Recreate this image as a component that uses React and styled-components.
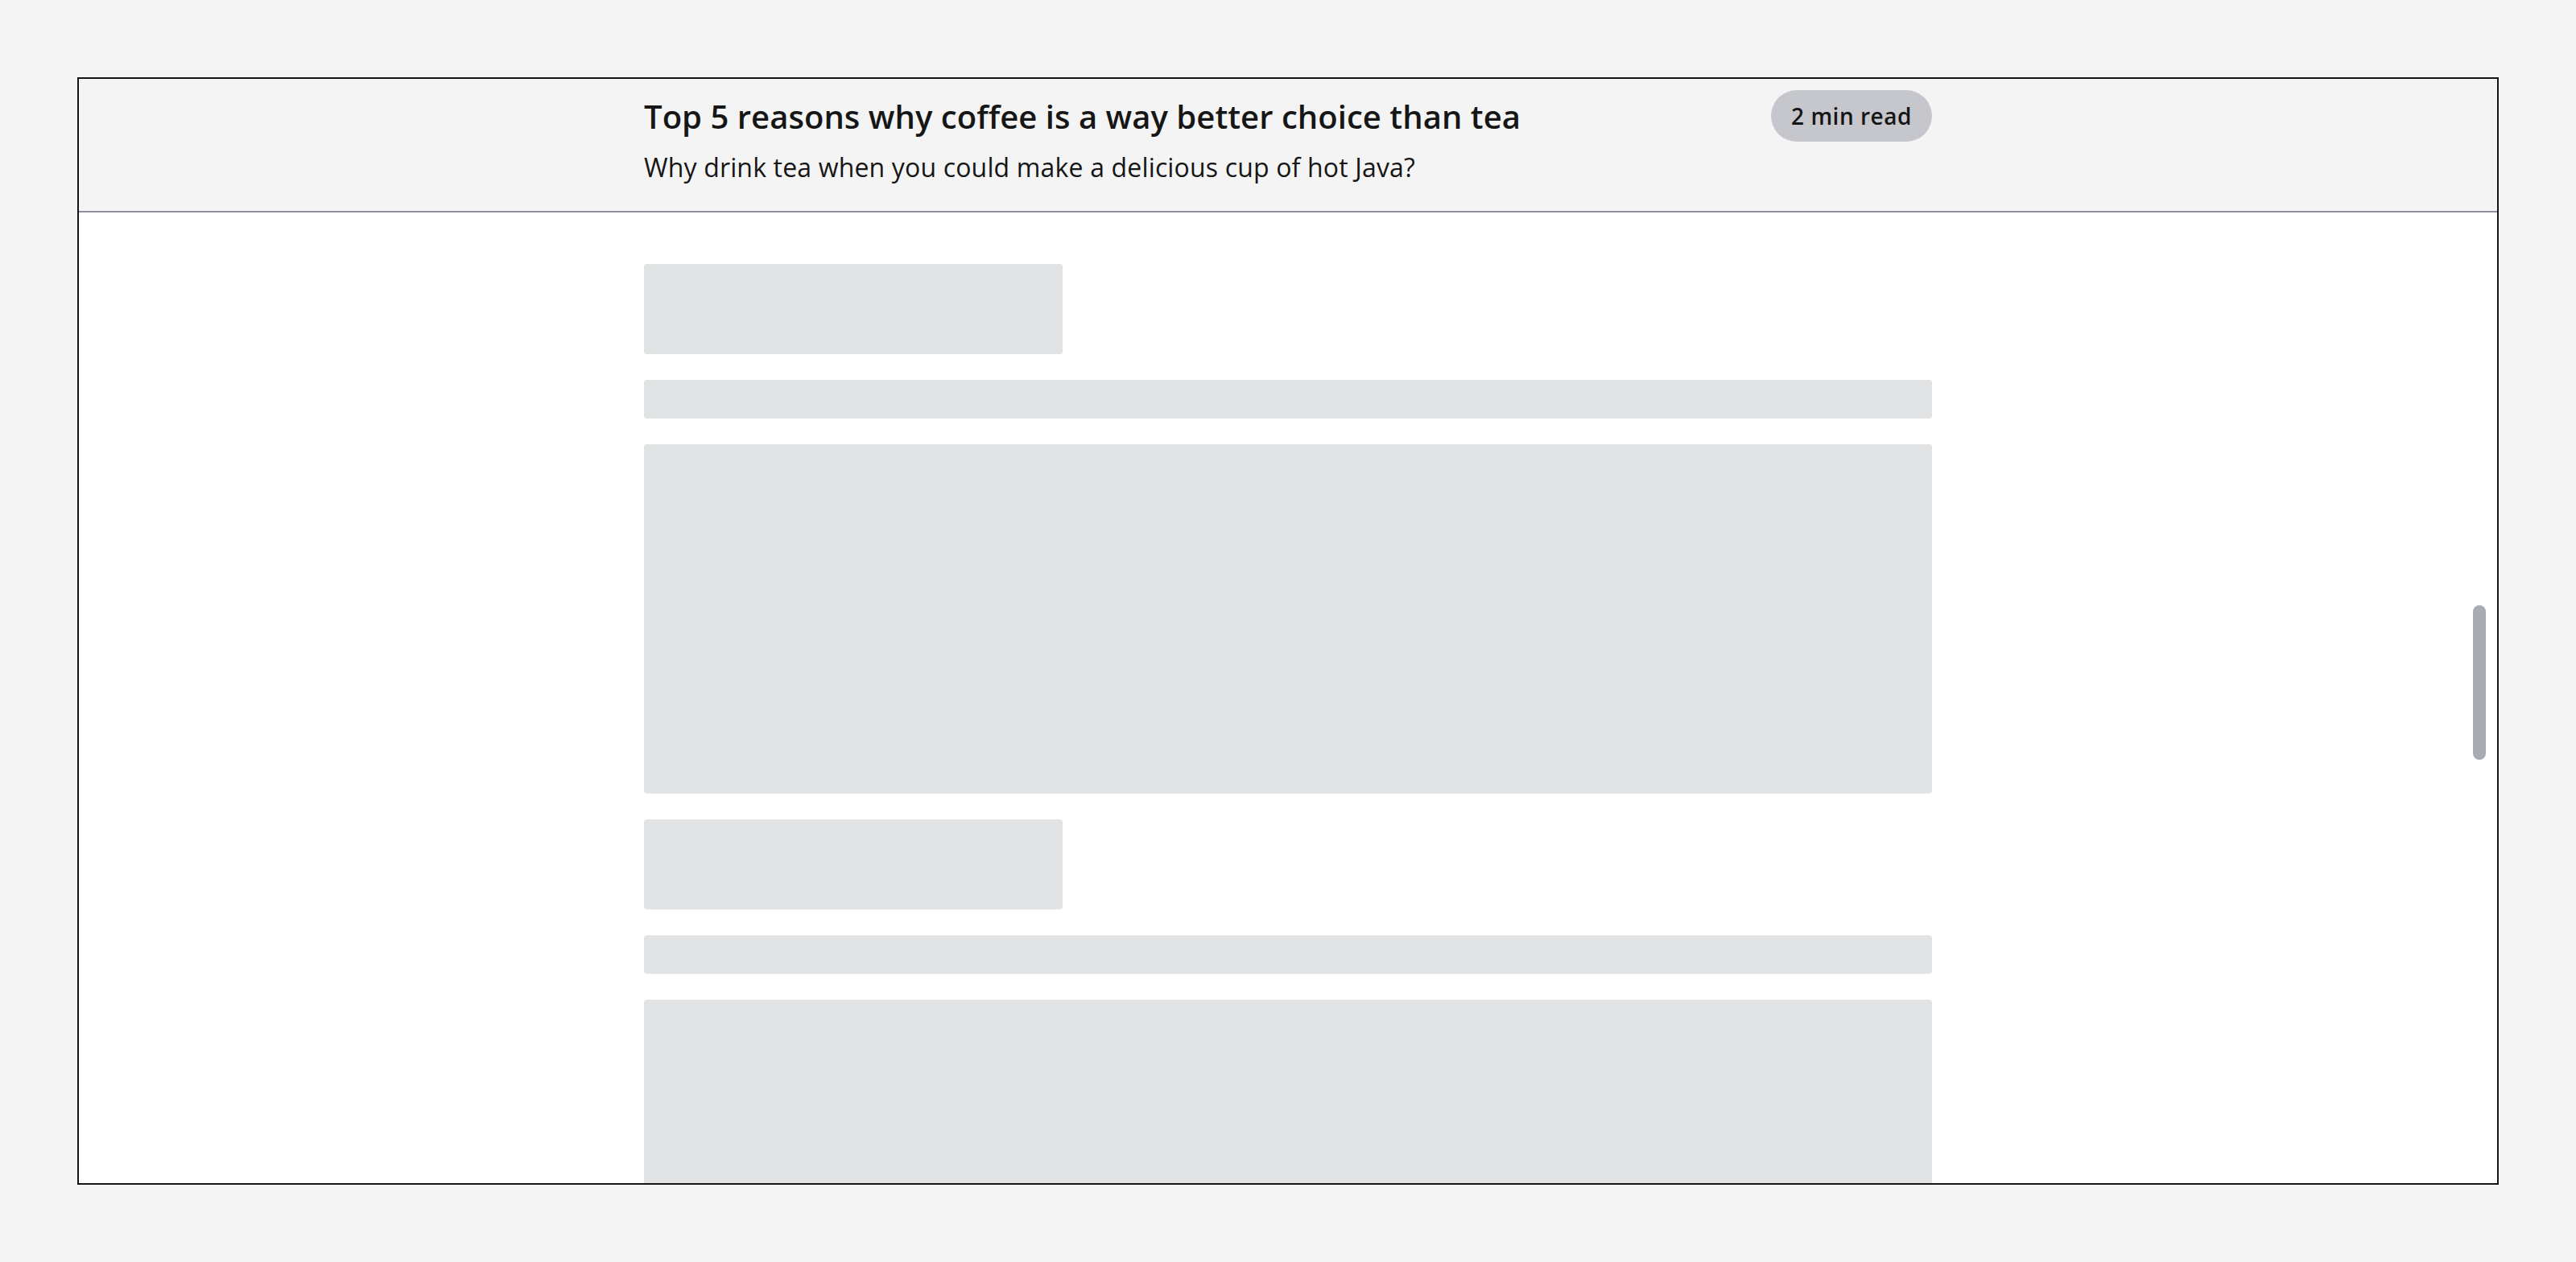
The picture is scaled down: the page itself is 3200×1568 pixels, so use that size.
import React from "react";
import styled, { createGlobalStyle } from "styled-components";

const GlobalStyle = createGlobalStyle`
  * { box-sizing: border-box; }
  html, body { margin: 0; padding: 0; }
  body {
    background: #f4f4f4;
    font-family: "Open Sans", "Noto Sans", sans-serif;
    color: #161616;
    -webkit-font-smoothing: antialiased;
  }
`;

const Frame = styled.div`
  position: relative;
  margin: 96px;
  height: 1376px;
  border: 2px solid #161616;
  display: flex;
  flex-direction: column;
  overflow: hidden;
  background: #ffffff;
`;

const Header = styled.header`
  flex: none;
  background: #f4f4f4;
  border-bottom: 2px solid #8d9199;
  padding: 14px 0 32px;
  display: flex;
  justify-content: center;
`;

const HeaderInner = styled.div`
  width: 1600px;
  display: flex;
  justify-content: space-between;
  align-items: flex-start;
`;

const Titles = styled.div`
  display: flex;
  flex-direction: column;
`;

const Title = styled.h1`
  margin: 5px 0 0;
  font-size: 40px;
  line-height: 56px;
  font-weight: 600;
  letter-spacing: 0.04px;
  color: #161616;
`;

const Subtitle = styled.p`
  margin: 13px 0 0;
  font-size: 32px;
  line-height: 44px;
  font-weight: 400;
  letter-spacing: 0.16px;
  color: #161616;
`;

const Badge = styled.span`
  flex: none;
  width: 200px;
  height: 64px;
  border-radius: 32px;
  background: #c5c7cc;
  color: #161616;
  font-size: 28px;
  font-weight: 600;
  letter-spacing: 0.5px;
  line-height: 64px;
  text-align: center;
  white-space: nowrap;
`;

const Body = styled.main`
  flex: 1;
  min-height: 0;
  background: #ffffff;
  padding-top: 64px;
  display: flex;
  justify-content: center;
  overflow: hidden;
`;

const Column = styled.div`
  width: 1600px;
  display: flex;
  flex-direction: column;
  align-items: flex-start;
  gap: 32px;
`;

const Skeleton = styled.div`
  flex: none;
  width: ${(p) => p.$w};
  height: ${(p) => p.$h}px;
  background: #e2e3e5;
  border-radius: 4px;
`;

const ScrollThumb = styled.div`
  position: absolute;
  right: 14px;
  top: 654px;
  width: 16px;
  height: 192px;
  border-radius: 8px;
  background: #a8acb2;
`;

const sections = [0, 1];

export default function App() {
  return (
    <>
      <GlobalStyle />
      <Frame>
        <Header>
          <HeaderInner>
            <Titles>
              <Title>Top 5 reasons why coffee is a way better choice than tea</Title>
              <Subtitle>Why drink tea when you could make a delicious cup of hot Java?</Subtitle>
            </Titles>
            <Badge>2 min read</Badge>
          </HeaderInner>
        </Header>
        <Body>
          <Column>
            {sections.map((s) => (
              <React.Fragment key={s}>
                <Skeleton $w="520px" $h={112} />
                <Skeleton $w="100%" $h={48} />
                <Skeleton $w="100%" $h={434} />
              </React.Fragment>
            ))}
          </Column>
        </Body>
        <ScrollThumb />
      </Frame>
    </>
  );
}
